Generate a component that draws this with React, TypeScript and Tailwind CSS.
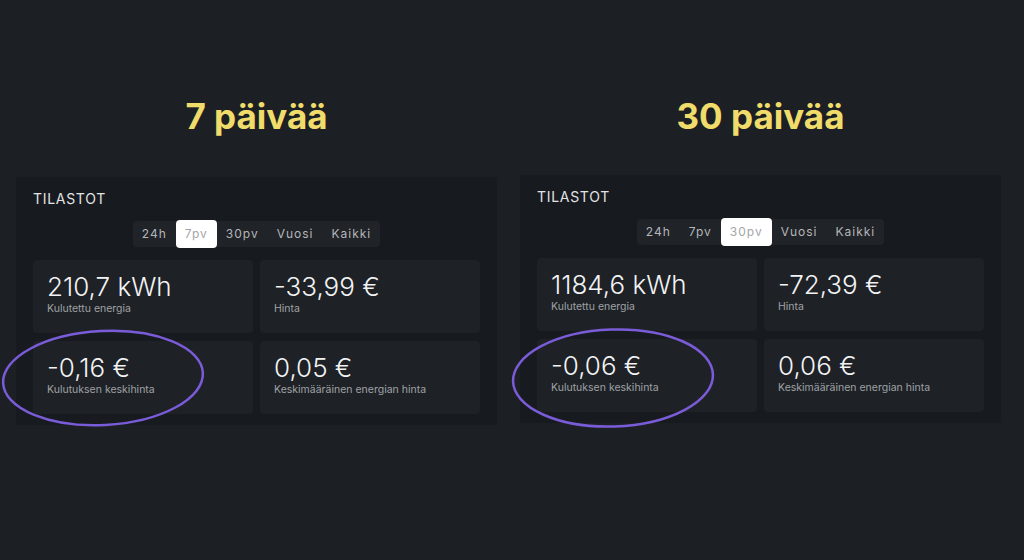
import React from "react";

type Stat = { value: string; label: string };

type PanelProps = {
  active: string;
  stats: Stat[];
};

const tabs = ["24h", "7pv", "30pv", "Vuosi", "Kaikki"];

function StatsPanel(props: PanelProps) {
  return (
    <div className="w-[481px] bg-[#171a1f] px-[17px] pt-[12px] pb-[11px]">
      <div className="text-[14px] leading-[20px] tracking-[0.7px] text-[#e2e3e5]">TILASTOT</div>
      <div className="flex justify-center mt-[12px]">
        <div className="flex h-[26px] items-stretch rounded-[4px] bg-[#202328]">
          {tabs.map((t) =>
            t === props.active ? (
              <div
                key={t}
                className="flex items-center px-[9px] -my-[1px] rounded-[4px] bg-white text-[12px] tracking-[1px] text-[#a3a5a8]"
              >
                {t}
              </div>
            ) : (
              <div key={t} className="flex items-center px-[9px] text-[12px] tracking-[1px] text-[#b4b6b9]">
                {t}
              </div>
            )
          )}
        </div>
      </div>
      <div className="grid grid-cols-2 gap-x-[7px] gap-y-[8px] mt-[13px]">
        {props.stats.map((s) => (
          <div key={s.label} className="h-[73px] rounded-[4px] bg-[#1e2126] px-[14px] pt-[11px]">
            <div className="text-[26px] leading-[31px] font-light text-[#f2f3f4]">{s.value}</div>
            <div className="text-[10.5px] leading-[14px] text-[#9ea1a5]">{s.label}</div>
          </div>
        ))}
      </div>
    </div>
  );
}

export default function App() {
  return (
    <div
      className="relative w-[1024px] h-[560px] overflow-hidden bg-[#1c2025] flex gap-[23px] pl-[16px]"
      style={{ fontFamily: "Inter, 'Noto Sans', sans-serif" }}
    >
      <div className="flex flex-col items-center pt-[94px]">
        <h1 className="text-[35px] leading-[44px] font-bold text-[#f0dc6a]">7 päivää</h1>
        <div className="mt-[39px]">
          <StatsPanel
            active="7pv"
            stats={[
              { value: "210,7 kWh", label: "Kulutettu energia" },
              { value: "-33,99 €", label: "Hinta" },
              { value: "-0,16 €", label: "Kulutuksen keskihinta" },
              { value: "0,05 €", label: "Keskimääräinen energian hinta" },
            ]}
          />
        </div>
      </div>
      <div className="flex flex-col items-center pt-[94px]">
        <h1 className="text-[35px] leading-[44px] font-bold text-[#f0dc6a]">30 päivää</h1>
        <div className="mt-[37px]">
          <StatsPanel
            active="30pv"
            stats={[
              { value: "1184,6 kWh", label: "Kulutettu energia" },
              { value: "-72,39 €", label: "Hinta" },
              { value: "-0,06 €", label: "Kulutuksen keskihinta" },
              { value: "0,06 €", label: "Keskimääräinen energian hinta" },
            ]}
          />
        </div>
      </div>
      <svg className="absolute inset-0 pointer-events-none" width="1024" height="560" viewBox="0 0 1024 560">
        <ellipse cx="103" cy="378" rx="100" ry="47" transform="rotate(-3 103 378)" fill="none" stroke="#7b5cd8" strokeWidth="2.5" />
        <ellipse cx="613" cy="378" rx="100" ry="48.5" transform="rotate(-2 613 378)" fill="none" stroke="#7b5cd8" strokeWidth="2.5" />
      </svg>
    </div>
  );
}
